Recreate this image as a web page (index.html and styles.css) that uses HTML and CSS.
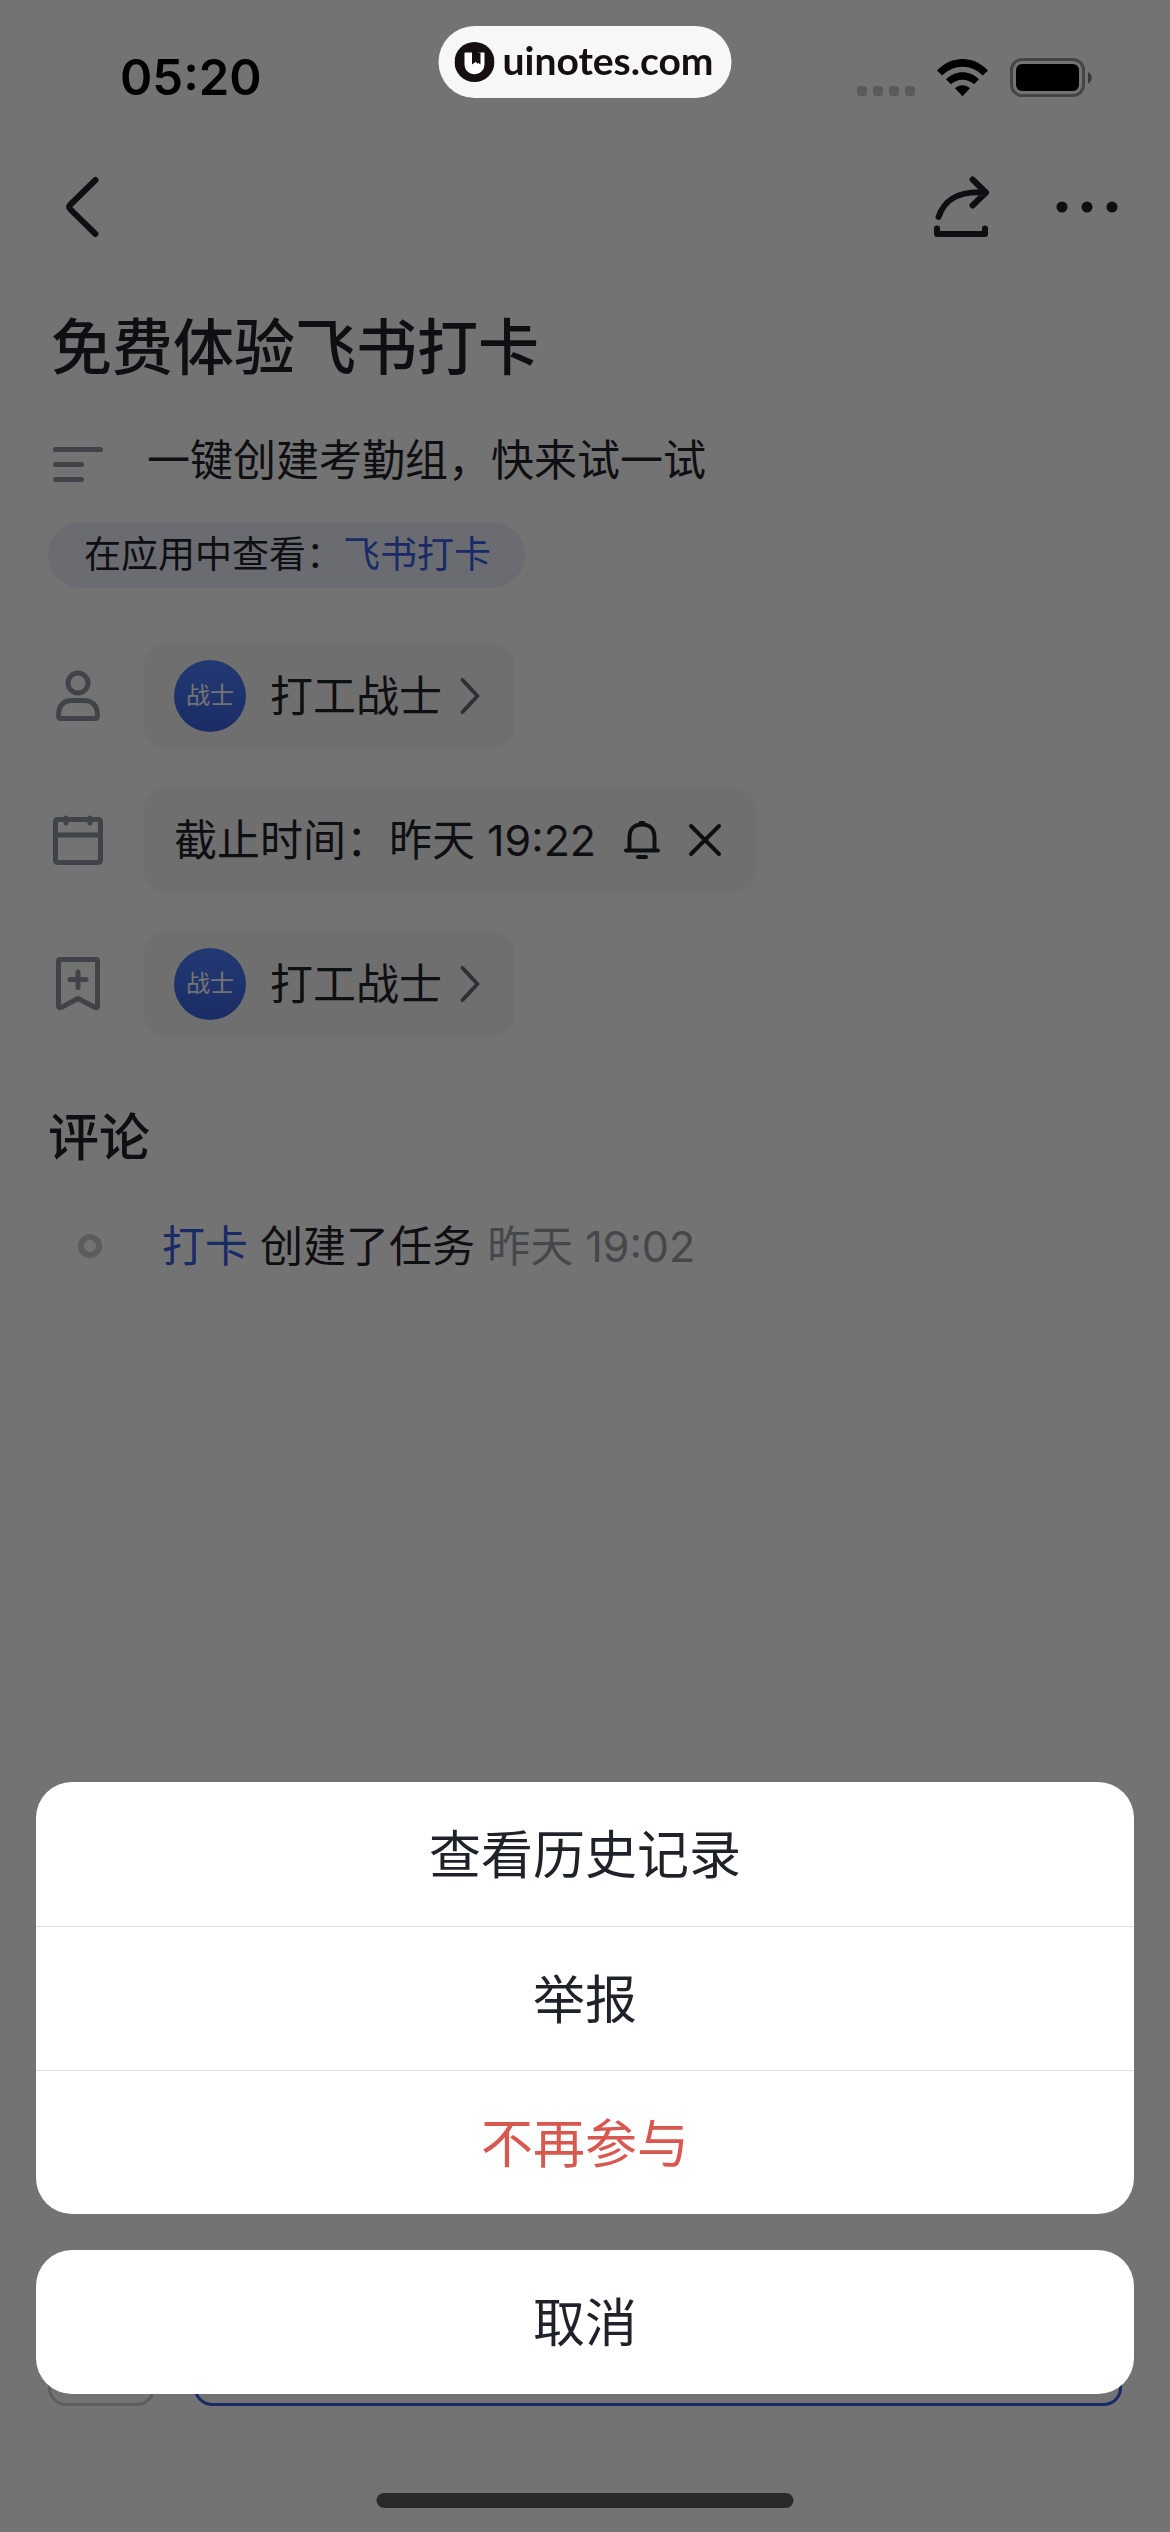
FILE: index.html
```html
<!DOCTYPE html>
<html lang="zh-CN">
<head>
<meta charset="utf-8">
<meta name="viewport" content="width=device-width, initial-scale=1">
<title>免费体验飞书打卡</title>
<link rel="stylesheet" href="styles.css">
</head>
<body>
<div class="page">
  <div class="status-bar">
    <span class="clock">05:20</span>
    <div class="status-icons">
      <svg class="signal" width="58" height="10" viewBox="0 0 58 10"><rect width="10" height="10" rx="3"/><rect x="16" width="10" height="10" rx="3"/><rect x="32" width="10" height="10" rx="3"/><rect x="48" width="10" height="10" rx="3"/></svg>
      <svg class="wifi" width="51" height="38" viewBox="0 0 51 38"><path d="M0 11.5C14.5-3.8 36.500-3.800 51 11.500L45.800 16.500C34.300 4.800 16.700 4.800 5.200 16.500Z"/><path d="M9 20.300C18.200 10.900 32.800 10.900 42 20.300L37 25.300C30.400 19.100 20.600 19.100 14 25.300Z"/><path d="M18 29.200C22 25.300 29 25.300 33 29.200L25.500 37.300Z"/></svg>
      <svg class="battery" width="82" height="40" viewBox="0 0 82 40"><rect x="1.500" y="1.500" width="72" height="36" rx="10.500" fill="none" stroke="#000" stroke-opacity=".4" stroke-width="3"/><rect x="6" y="6" width="63" height="27" rx="6"/><path d="M78 14c5 2 5 9.500 0 11.500z" fill-opacity=".5"/></svg>
    </div>
  </div>

  <header class="nav-bar">
    <button class="icon-button" type="button" aria-label="返回">
      <svg width="34" height="62" viewBox="0 0 34 62"><path class="line" d="M30.500 4 5.500 28.500Q3 31 5.500 33.500L30.500 58"/></svg>
    </button>
    <div class="nav-actions">
      <button class="icon-button" type="button" aria-label="分享">
        <svg width="56" height="62" viewBox="0 0 56 62"><path class="line" d="M4.500 41C11 22 26 14.500 52 16.500M38.500 3.500 52 16.500 38.500 29.500M3 52.500V58H51V52.500"/></svg>
      </button>
      <button class="icon-button" type="button" aria-label="更多">
        <svg width="62" height="12" viewBox="0 0 62 12"><circle cx="6" cy="6" r="5.500"/><circle cx="31" cy="6" r="5.500"/><circle cx="56" cy="6" r="5.500"/></svg>
      </button>
    </div>
  </header>

  <main class="content">
    <h1 class="task-title">免费体验飞书打卡</h1>
    <div class="row description">
      <span class="row-icon"><svg width="50" height="36" viewBox="0 0 50 36"><path class="rule" d="M2.500 2.500H47.500M2.500 17.500H28.500M2.500 32.500H28.500"/></svg></span>
      <p class="text">一键创建考勤组，快来试一试</p>
    </div>
    <p class="app-tag">在应用中查看：<a href="#">飞书打卡</a></p>

    <div class="fields">
      <div class="row">
        <span class="row-icon"><svg width="50" height="54" viewBox="0 0 50 54"><circle class="rule" cx="25" cy="14" r="10"/><path class="rule" d="M5.500 46.500C5.500 36 11 31.500 19 31.500H31C39 31.500 44.500 36 44.500 46.500 44.500 49 43.500 49.500 42 49.500H8C6.500 49.500 5.500 49 5.500 46.500Z"/></svg></span>
        <button class="chip" type="button"><span class="avatar">战士</span><span class="person">打工战士</span><svg class="chevron" width="20" height="36" viewBox="0 0 20 36"><path class="thin" d="M2.500 2 17.500 18 2.500 34"/></svg></button>
      </div>
      <div class="row">
        <span class="row-icon"><svg width="50" height="54" viewBox="0 0 50 54"><rect class="rule" x="2.500" y="6.500" width="45" height="43" rx="2"/><path class="rule" d="M3 22H47M13 5V10M37 5V10"/></svg></span>
        <div class="chip due"><span>截止时间：昨天 19:22</span><button type="button" aria-label="提醒"><svg width="36" height="40" viewBox="0 0 36 40"><path class="thin" d="M5.500 30V17.500C5.500 9 10 4.500 18 4.500S30.500 9 30.500 17.500V30M2 30.500H34M14 37H22M16.500 3H19.500"/></svg></button><button type="button" aria-label="清除"><svg width="34" height="34" viewBox="0 0 34 34"><path class="thin" d="M3 3 31 31M31 3 3 31"/></svg></button></div>
      </div>
      <div class="row">
        <span class="row-icon"><svg width="50" height="56" viewBox="0 0 50 56"><path class="rule" d="M7 3.500H43Q44.500 3.500 44.500 5V50Q44.500 52.500 42 51.500L25 42.500 8 51.500Q5.500 52.500 5.500 50V5Q5.500 3.500 7 3.500ZM25 16V31.500M17 23.500H33"/></svg></span>
        <button class="chip" type="button"><span class="avatar">战士</span><span class="person">打工战士</span><svg class="chevron" width="20" height="36" viewBox="0 0 20 36"><path class="thin" d="M2.500 2 17.500 18 2.500 34"/></svg></button>
      </div>
    </div>

    <section>
      <h2 class="comments-title">评论</h2>
      <div class="activity">
        <span class="bullet"></span>
        <p class="text"><a href="#">打卡</a> 创建了任务 <time>昨天 19:02</time></p>
      </div>
    </section>
  </main>

  <footer class="composer">
    <button class="composer-attach" type="button" aria-label="附件"></button>
    <button class="composer-primary" type="button" aria-label="完成任务"></button>
  </footer>
</div>

<div class="backdrop"></div>

<div class="brand">
  <svg width="40" height="40" viewBox="0 0 40 40"><circle cx="20" cy="20" r="20" fill="#15100f"/><path d="M11 10.500H17.500V22L20.500 19 23.500 22V10.500H30V22C30 35.500 10 35.500 10 22V11.500Q10 10.500 11 10.500Z" fill="#fff"/><path d="M17.500 10.500H26V22.500L21.800 19.500 17.500 22.500Z" fill="#15100f"/></svg>
  <span>uinotes.com</span>
</div>

<div class="sheet" role="dialog" aria-label="更多操作">
  <div class="sheet-group">
    <button class="sheet-item" type="button">查看历史记录</button>
    <button class="sheet-item" type="button">举报</button>
    <button class="sheet-item danger" type="button">不再参与</button>
  </div>
  <div class="sheet-group">
    <button class="sheet-item" type="button">取消</button>
  </div>
</div>
<div class="home-indicator"></div>
</body>
</html>
```

FILE: styles.css
```css
:root {
  --ink: #1f2329;
  --muted: #9a9fa6;
  --icon: #8f959e;
  --link: #3960e2;
  --font: Inter, "Noto Sans CJK SC", sans-serif;
}

* {
  box-sizing: border-box;
}

body {
  margin: 0;
  color: var(--ink);
  background: #fff;
  font: 400 43px/60px var(--font);
}

h1, h2, p {
  margin: 0;
}

button {
  padding: 0;
  border: 0;
  background: none;
  color: inherit;
  font: inherit;
}

a {
  color: var(--link);
  text-decoration: none;
}

svg {
  display: block;
  flex: none;
}

.page {
  display: flex;
  flex-direction: column;
  min-height: 100vh;
}

/* Status bar */
.status-bar {
  display: flex;
  align-items: center;
  justify-content: space-between;
  height: 141px;
  padding: 15px 78px 0 120px;
  color: #000;
}

.clock {
  font-size: 49px;
  font-weight: 600;
}

.status-icons {
  display: flex;
  align-items: flex-end;
}

.signal {
  margin: 0 22px 2px 0;
  opacity: .2;
}

.wifi {
  margin: 0 22px 1px 0;
}

/* Navigation */
.nav-bar {
  display: flex;
  align-items: center;
  justify-content: space-between;
  height: 132px;
  padding: 0 52px 0 65px;
}

.nav-actions {
  display: flex;
  align-items: center;
  gap: 66px;
}

.line {
  fill: none;
  stroke: currentColor;
  stroke-width: 6;
  stroke-linecap: round;
  stroke-linejoin: round;
}

.icon-button svg {
  fill: currentColor;
}

/* Task */
.content {
  padding: 27px 48px;
}

.task-title {
  padding-left: 3px;
  font-size: 61px;
  font-weight: 500;
  line-height: 96px;
}

.row {
  display: flex;
  align-items: center;
}

.row-icon {
  flex: none;
  width: 96px;
  padding-left: 5px;
  color: var(--icon);
}

.description {
  margin-top: 34px;
}

.description .row-icon {
  width: 99px;
  padding-top: 9px;
}

.rule {
  fill: none;
  stroke: currentColor;
  stroke-width: 5;
  stroke-linecap: round;
  stroke-linejoin: round;
}

.app-tag {
  width: fit-content;
  margin-top: 32px;
  padding: 0 34px 0 36px;
  border-radius: 33px;
  background: #ecf0fb;
  font-size: 37px;
  line-height: 66px;
}

.fields {
  display: grid;
  gap: 36px;
  margin-top: 54px;
}

.chip {
  display: flex;
  align-items: center;
  height: 108px;
  padding: 0 30px;
  border-radius: 24px;
  background: #f5f6f6;
}

.avatar {
  width: 72px;
  margin-right: 24px;
  border-radius: 50%;
  background: linear-gradient(#4f7eff, #3a63e0);
  color: #fff;
  font-size: 24px;
  line-height: 72px;
  text-align: center;
}

.chevron {
  margin: 0 5px 0 18px;
  color: #646a73;
}

.thin {
  fill: none;
  stroke: currentColor;
  stroke-width: 4;
  stroke-linecap: round;
  stroke-linejoin: round;
}

.due {
  gap: 28px;
  padding-right: 34px;
}

/* Comments */
.comments-title {
  margin-top: 64px;
  font-size: 51px;
  font-weight: 500;
  line-height: 72px;
}

.activity {
  display: flex;
  align-items: center;
  gap: 60px;
  margin-top: 42px;
  padding-left: 30px;
}

.bullet {
  width: 24px;
  height: 24px;
  border: 6px solid #cacccf;
  border-radius: 50%;
}

.activity time {
  color: var(--muted);
}

/* Composer */
.composer {
  display: flex;
  gap: 39px;
  margin-top: auto;
  padding: 0 48px 126px;
}

.composer button {
  height: 108px;
  border: 3px solid #d0d3d6;
  border-radius: 18px;
}

.composer-attach {
  width: 107px;
}

.composer .composer-primary {
  flex: 1;
  border-color: var(--link);
}

/* Overlays */
.backdrop {
  position: fixed;
  inset: 0;
  background: rgba(0, 0, 0, .55);
}

.brand {
  position: absolute;
  top: 26px;
  left: 50%;
  display: flex;
  align-items: center;
  gap: 8px;
  height: 72px;
  padding: 0 18px 0 16px;
  border-radius: 36px;
  background: #f7f7f7;
  color: #15100f;
  font: 700 39px/68px Lato, sans-serif;
  transform: translateX(-50%);
}

.brand span {
  padding-bottom: 4px;
}

.sheet {
  position: fixed;
  right: 36px;
  bottom: 138px;
  left: 36px;
  display: grid;
  gap: 36px;
}

.sheet-group {
  overflow: hidden;
  border-radius: 36px;
  background: #fff;
}

.sheet-item {
  display: block;
  width: 100%;
  height: 144px;
  padding-top: 4px;
  font-size: 52px;
}

.sheet-item + .sheet-item {
  border-top: 1px solid #dee0e3;
}

.danger {
  color: #d8574f;
}

.home-indicator {
  position: fixed;
  bottom: 24px;
  left: 50%;
  width: 417px;
  height: 15px;
  border-radius: 8px;
  background: #2a2a2a;
  transform: translateX(-50%);
}
```
